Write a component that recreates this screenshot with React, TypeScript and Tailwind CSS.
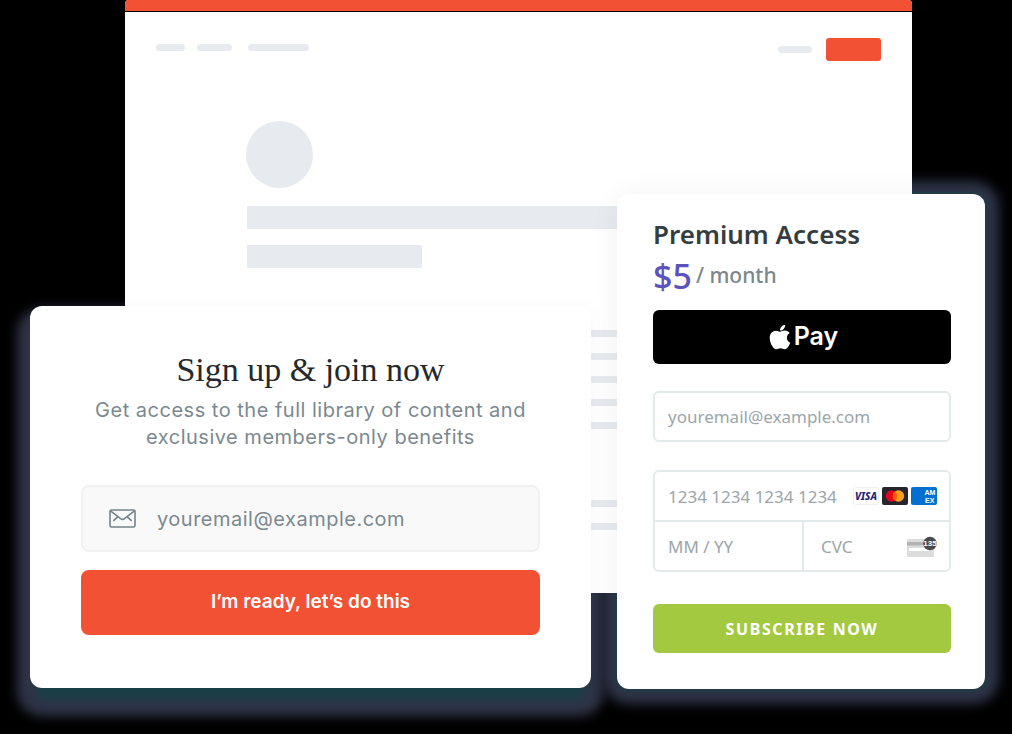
import type { ReactNode } from "react";
import { FaApple } from "react-icons/fa";

const PARAGRAPHS = [
  { id: "intro", lines: 5 },
  { id: "body", lines: 2 },
];

export default function App() {
  return (
    <main className="isolate grid min-h-screen bg-black font-['Noto_Sans',sans-serif]">
      <SitePreview />
      <div className="flex items-start gap-[26px] pr-[27px] pl-[30px] [grid-area:1/1]">
        <SignupCard />
        <PremiumCard />
      </div>
    </main>
  );
}

function SitePreview() {
  return (
    <div className="mr-[100px] ml-[125px] self-start overflow-hidden rounded-t bg-white pb-[63px] [grid-area:1/1]">
      <div className="h-3 border-b border-black bg-[#f25133]" />
      <div className="flex items-center justify-between pt-[26px] pr-[31px] pl-[31px]">
        <div className="flex pb-1">
          <Bar className="mr-3 h-[7px] w-[29px] rounded-sm" />
          <Bar className="mr-4 h-[7px] w-[35px] rounded-sm" />
          <Bar className="h-[7px] w-[61px] rounded-sm" />
        </div>
        <div className="flex items-center gap-3.5">
          <Bar className="h-[7px] w-[34px] rounded-sm" />
          <div className="h-[23px] w-[55px] rounded-[3px] bg-[#f25133]" />
        </div>
      </div>
      <div className="px-[122px] pt-[60px]">
        <Bar className="-ml-px size-[67px] rounded-full" />
        <Bar className="mt-[18px] h-[23px]" />
        <Bar className="mt-4 h-[23px] w-[175px]" />
        <div className="mt-[62px] space-y-[71px]">
          {PARAGRAPHS.map((p) => (
            <div key={p.id} className="space-y-4">
              {Array.from({ length: p.lines }, (_, i) => (
                <Bar key={i} className="h-[7px]" />
              ))}
            </div>
          ))}
        </div>
      </div>
    </div>
  );
}

function Bar({ className }: { className: string }) {
  return <div className={`bg-[#e7eaee] ${className}`} />;
}

function SignupCard() {
  return (
    <section className="relative mt-[306px] flex-1 rounded-xl bg-white px-[51px] pt-11 pb-[53px] shadow-[0_4px_24px_rgba(0,0,0,0.04)] before:absolute before:inset-0 before:-z-10 before:rounded-xl before:shadow-[0_18px_8px_-6px_#1c3f48,0_15px_12px_13px_#31354a]">
      <h2 className="text-center font-['Liberation_Serif',serif] text-[34px] leading-10 text-[#25292b]">
        Sign up &amp; join now
      </h2>
      <p className="mt-[7px] text-center font-['Inter',sans-serif] text-xl leading-[27px] tracking-wide text-[#7b898f]">
        Get access to the full library of content and exclusive members-only benefits
      </p>
      <form className="mt-[34px] font-['Inter',sans-serif]" onSubmit={(e) => e.preventDefault()}>
        <label className="flex h-[67px] items-center rounded-lg border-2 border-[#eff1f2] bg-[#f9f9fa] px-[26px]">
          <EnvelopeIcon />
          <input
            type="email"
            aria-label="Email address"
            placeholder="youremail@example.com"
            className="ml-[21px] min-w-0 flex-1 bg-transparent text-xl tracking-wide text-[#7b898f] outline-none placeholder:text-[#7b898f]"
          />
        </label>
        <button className="mt-[18px] h-[65px] w-full rounded-lg bg-[#f25133] text-[19px] font-semibold text-white">
          I’m ready, let’s do this
        </button>
      </form>
    </section>
  );
}

function PremiumCard() {
  return (
    <section className="relative mt-[194px] w-[368px] shrink-0 rounded-xl bg-white pt-6 pr-[34px] pb-9 pl-9 shadow-[0_0_28px_rgba(0,0,0,0.06)] before:absolute before:inset-0 before:-z-10 before:rounded-xl before:shadow-[0_0_4px_2px_#1c3f48,0_1px_12px_14px_#31354a]">
      <h2 className="text-[26px] leading-8 font-semibold text-[#343d40]">Premium Access</h2>
      <p className="flex h-[52px] items-center gap-1">
        <span className="text-[34px] font-medium text-[#5b53bb]">$5</span>
        <span className="text-[21px] font-medium text-[#7b878c]">/ month</span>
      </p>
      <button
        aria-label="Apple Pay"
        className="mt-2 flex h-[54px] w-full items-center justify-center rounded-md bg-black text-white"
      >
        <FaApple className="size-7" />
        <span className="font-['Inter',sans-serif] text-[25px] font-semibold">Pay</span>
      </button>
      <form onSubmit={(e) => e.preventDefault()}>
        <Field className="mt-[27px] h-[51px] rounded-md border-2">
          <CardInput type="email" label="Email" placeholder="youremail@example.com" />
        </Field>
        <div className="mt-7 overflow-hidden rounded-md border-2 border-[#e4e9eb]">
          <Field className="h-[50px] border-b-2">
            <CardInput label="Card number" placeholder="1234 1234 1234 1234" />
            <div className="flex shrink-0 gap-[3px] pr-3">
              <VisaIcon />
              <MastercardIcon />
              <AmexIcon />
            </div>
          </Field>
          <div className="grid grid-cols-2">
            <Field className="h-12">
              <CardInput label="Expiry date" placeholder="MM / YY" />
            </Field>
            <Field className="h-12 border-l-2 pl-1">
              <CardInput label="Security code" placeholder="CVC" />
              <div className="shrink-0 pr-3">
                <CvcIcon />
              </div>
            </Field>
          </div>
        </div>
        <button className="mt-8 h-[49px] w-full rounded-md bg-[#a3c940] text-base font-bold tracking-widest text-white">
          SUBSCRIBE NOW
        </button>
      </form>
    </section>
  );
}

function Field({ className, children }: { className: string; children: ReactNode }) {
  return <div className={`flex items-center border-[#e4e9eb] ${className}`}>{children}</div>;
}

function CardInput({ label, placeholder, type = "text" }: { label: string; placeholder: string; type?: string }) {
  return (
    <input
      type={type}
      aria-label={label}
      placeholder={placeholder}
      className="h-full w-0 min-w-0 flex-1 bg-transparent pl-[13px] font-['Noto_Sans',sans-serif] text-[17px] outline-none placeholder:text-[#9ca6ab]"
    />
  );
}

function EnvelopeIcon() {
  return (
    <svg width="27" height="19" viewBox="0 0 27 19" fill="none" stroke="#75848a" strokeWidth="1.6" strokeLinecap="round" strokeLinejoin="round">
      <rect x="1" y="1" width="25" height="17" rx="1.5" />
      <path d="M1.5 1.8 11.6 9.6c1.2.9 2.6.9 3.8 0L25.5 1.8M4.8 11.4l4-3.6M22.2 11.4l-4-3.6" />
    </svg>
  );
}

function VisaIcon() {
  return (
    <svg width="26" height="18" viewBox="0 0 26 18">
      <rect x="0.5" y="0.5" width="25" height="17" rx="2" fill="#fff" stroke="#eef0f4" />
      <text x="13" y="12.8" textAnchor="middle" fontFamily="Noto Sans, sans-serif" fontSize="10" fontWeight="800" fontStyle="italic" fill="#261f78">
        VISA
      </text>
    </svg>
  );
}

function MastercardIcon() {
  return (
    <svg width="26" height="18" viewBox="0 0 26 18">
      <rect width="26" height="18" rx="2" fill="#25252b" />
      <circle cx="9.5" cy="9" r="5.7" fill="#eb001b" />
      <circle cx="16.5" cy="9" r="5.7" fill="#f79e1b" />
      <path d="M13 4.5a5.7 5.7 0 0 1 0 9 5.7 5.7 0 0 1 0-9z" fill="#ff5f00" />
    </svg>
  );
}

function AmexIcon() {
  return (
    <svg width="26" height="18" viewBox="0 0 26 18">
      <rect width="26" height="18" rx="2" fill="#016fd0" />
      <g fontFamily="Liberation Sans, sans-serif" fontSize="7" fontWeight="700" fill="#fff">
        <text x="13.5" y="7.6">AM</text>
        <text x="14" y="15.6">EX</text>
      </g>
    </svg>
  );
}

function CvcIcon() {
  return (
    <svg width="30" height="21" viewBox="0 0 30 21">
      <rect y="3" width="27" height="18" rx="1.5" fill="#dcdcdc" />
      <rect y="6" width="27" height="3.5" fill="#b3b3b3" />
      <rect x="2" y="12" width="20" height="3" fill="#fff" />
      <circle cx="23" cy="7.5" r="6.8" fill="#4a4a4c" />
      <text x="23" y="10.4" textAnchor="middle" fontFamily="Liberation Sans, sans-serif" fontSize="8" fontWeight="700" fill="#fff">
        135
      </text>
    </svg>
  );
}
